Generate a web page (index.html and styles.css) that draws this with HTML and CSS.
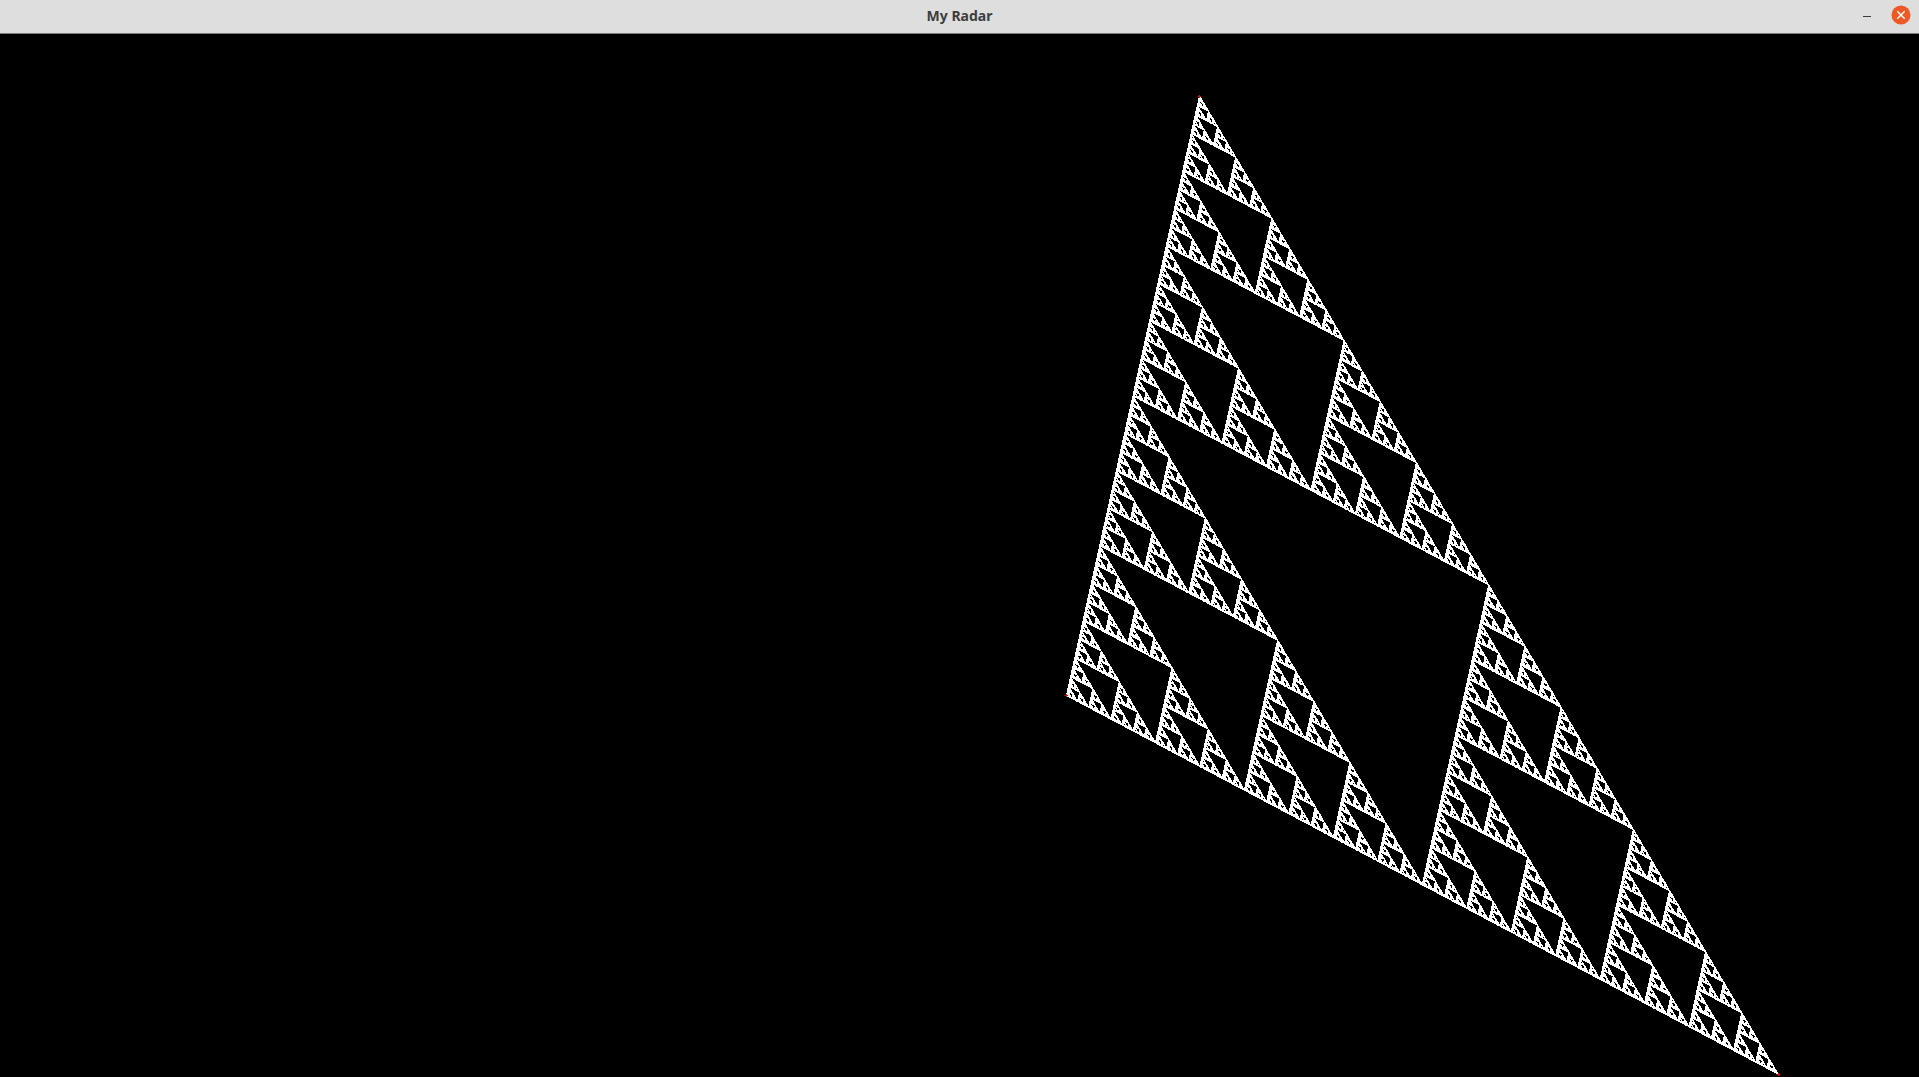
FILE: index.html
```html
<!DOCTYPE html>
<html lang="en">
<head>
<meta charset="utf-8">
<title>My Radar</title>
<link rel="stylesheet" href="styles.css">
</head>
<body>
<div class="window">
  <header class="titlebar">
    <span class="title">My Radar</span>
    <div class="controls">
      <button class="btn" aria-label="Minimize"><svg width="8" height="20" viewBox="0 0 8 20"><rect x="0" y="11" width="8" height="1" fill="#3d3d3d"/></svg></button>
      <button class="btn btn-close" aria-label="Close"><svg width="20" height="20" viewBox="0 0 20 20"><circle cx="10" cy="10" r="9.5" fill="#ee5a25"/><path d="M6.3 6.3 13.7 13.7M13.7 6.3 6.3 13.7" stroke="#fff" stroke-width="1.4"/></svg></button>
    </div>
  </header>
  <canvas id="radar" class="radar" width="1919" height="1043"></canvas>
</div>
<script src="app.js"></script>
</body>
</html>
```
FILE: styles.css
```css
html, body { margin: 0; height: 100%; background: #000; overflow: hidden; }
.window { display: flex; flex-direction: column; height: 100vh; }
.titlebar {
  flex: 0 0 34px; box-sizing: border-box; height: 34px; padding-bottom: 2px;
  display: flex; align-items: center; justify-content: center;
  background: #dedede; border-bottom: 1px solid #7a7a7a;
  position: relative;
}
.title { font: 700 14px "Noto Sans", "Open Sans", sans-serif; color: #3d3d3d; }
.controls { position: absolute; right: 8px; top: 5px; display: flex; align-items: center; gap: 20px; }
.btn { border: 0; padding: 0; background: none; display: flex; }
.radar { display: block; flex: 1 1 auto; width: 1919px; height: 1043px; background: #000; }
```
FILE: app.js
```js
const canvas = document.getElementById('radar');
const ctx = canvas.getContext('2d');
const W = canvas.width, H = canvas.height;
const img = ctx.createImageData(W, H);
const OFF = 34;
const A = [1199.5, 96 - OFF], B = [1066.5, 695.5 - OFF], C = [1778, 1074 - OFF];
const DEPTH = 11;
const PLUS = [[0, 0], [1, 0], [-1, 0], [0, 1], [0, -1]];

function put(x, y, r, g, b) {
  if (x < 0 || y < 0 || x >= W || y >= H) return;
  const i = (y * W + x) * 4;
  img.data[i] = r; img.data[i + 1] = g; img.data[i + 2] = b; img.data[i + 3] = 255;
}
const mid = (p, q) => [(p[0] + q[0]) / 2, (p[1] + q[1]) / 2];
function plot(p) { put(Math.floor(p[0]), Math.floor(p[1]), 255, 255, 255); }
function sierpinski(a, b, c, n) {
  if (n === 0) { plot(a); plot(b); plot(c); return; }
  const ab = mid(a, b), bc = mid(b, c), ca = mid(c, a);
  sierpinski(a, ab, ca, n - 1);
  sierpinski(ab, b, bc, n - 1);
  sierpinski(ca, bc, c, n - 1);
}
for (let i = 0; i < H * W; i++) img.data[i * 4 + 3] = 255;
sierpinski(A, B, C, DEPTH);
[A, B, C].forEach(p => PLUS.forEach(d => put(Math.floor(p[0]) + d[0], Math.floor(p[1]) + d[1], 255, 0, 0)));
ctx.putImageData(img, 0, 0);
```
